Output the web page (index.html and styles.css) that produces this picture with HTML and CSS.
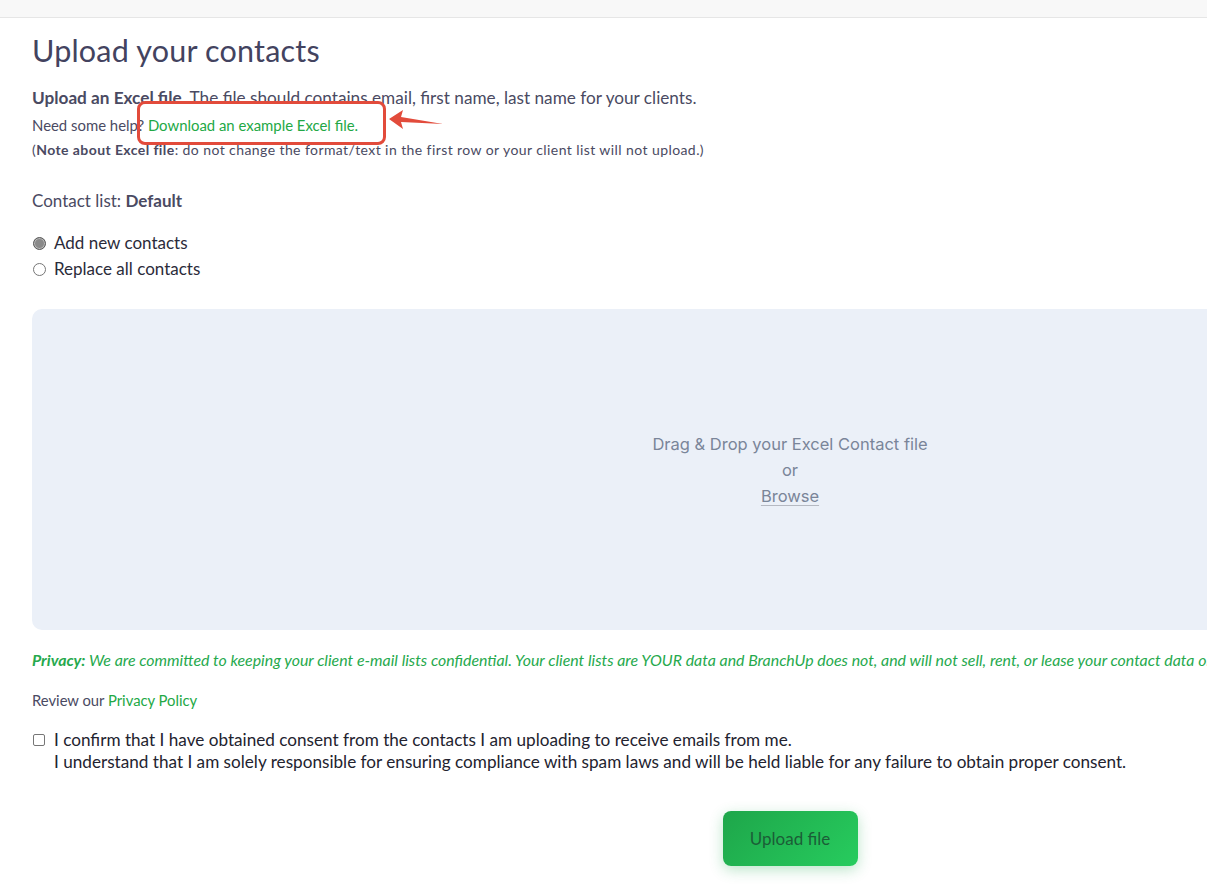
FILE: index.html
```html
<!DOCTYPE html>
<html>
<head>
<meta charset="utf-8">
<link rel="stylesheet" href="styles.css">
</head>
<body>
<div class="topbar"></div>
<main class="page">
  <h1 class="title">Upload your contacts</h1>
  <p class="intro"><strong>Upload an Excel file.</strong> The file should contains email, first name, last name for your clients.</p>
  <p class="help">Need some help? <span class="callout-wrap"><a class="link" href="#">Download an example Excel file.</a><span class="callout"></span>
    <svg class="arrow" width="60" height="24" viewBox="0 0 60 24"><path d="M2 10 L16 1 L14 8 L56 15 L14 13 L16 20 Z" fill="#e24b3b"/></svg></span></p>
  <p class="note">(<strong>Note about Excel file</strong>: do not change the format/text in the first row or your client list will not upload.)</p>

  <p class="list">Contact list: <strong>Default</strong></p>

  <div class="radios">
    <label class="radio"><span class="dot checked"></span>Add new contacts</label>
    <label class="radio"><span class="dot"></span>Replace all contacts</label>
  </div>

  <div class="dropzone">
    <div class="drop-text">
      <div>Drag &amp; Drop your Excel Contact file</div>
      <div>or</div>
      <div class="browse">Browse</div>
    </div>
  </div>

  <p class="privacy"><strong>Privacy:</strong> We are committed to keeping your client e-mail lists confidential. Your client lists are YOUR data and BranchUp does not, and will not sell, rent, or lease your contact data or share it with any third party.</p>

  <p class="review">Review our <a class="link" href="#">Privacy Policy</a></p>

  <label class="consent"><span class="box"></span><span>I confirm that I have obtained consent from the contacts I am uploading to receive emails from me.<br>I understand that I am solely responsible for ensuring compliance with spam laws and will be held liable for any failure to obtain proper consent.</span></label>

  <div class="actions"><button class="upload">Upload file</button></div>
</main>
</body>
</html>
```
FILE: styles.css
```css
html, body { margin: 0; padding: 0; overflow: hidden; background: #fff; }
body { font-family: "Lato", "Noto Sans", sans-serif; color: #46465f; width: 1207px; height: 890px; }
.topbar { height: 17px; background: #f8f8f8; border-bottom: 1px solid #e6e6e6; }
.page { width: 1516px; padding-left: 32px; }
.title { margin: 14px 0 0; font-size: 30.5px; font-weight: 400; color: #43435f; line-height: 36px; letter-spacing: 0.2px; }
p { margin: 0; }
.intro { margin-top: 19px; font-size: 17.2px; line-height: 22px; color: #4a4a62; }
.intro strong { font-weight: 700; }
.help { margin-top: 5px; font-size: 14.9px; line-height: 22px; color: #4a4a62; }
.link { color: #22a845; text-decoration: none; }
.callout-wrap { position: relative; }
.callout { position: absolute; left: -11px; top: -15px; width: 243px; height: 38px; border: 3px solid #e24b3b; border-radius: 8px; }
.arrow { position: absolute; left: 239px; top: -7px; }
.note { margin-top: 4px; font-size: 14px; letter-spacing: 0.42px; line-height: 20px; color: #4a4a62; }
.list { margin-top: 30px; font-size: 17px; line-height: 22px; color: #4a4a62; }
.radios { margin-top: 20px; display: flex; flex-direction: column; gap: 4px; }
.radio { display: flex; align-items: center; font-size: 17px; line-height: 22px; color: #2b2b3a; }
.dot { width: 13px; height: 13px; border: 1px solid #767676; border-radius: 50%; margin-right: 8px; margin-left: 1px; box-sizing: border-box; background: #fff; }
.dot.checked { background: #8a8a8a; border-color: #5a5a5a; box-shadow: inset 0 0 0 1px #b8b8b8; }
.dropzone { margin-top: 29px; height: 321px; background: #ebf0f8; border-radius: 10px; display: flex; align-items: center; justify-content: center; }
.drop-text { font-family: "Inter", "Noto Sans", sans-serif; font-size: 16.5px; line-height: 26px; color: #7a8599; text-align: center; margin-top: 1px; }
.browse { text-decoration: underline; text-decoration-color: #b5b9c2; text-underline-offset: 3px; }
.privacy { margin-top: 21px; font-size: 15.9px; line-height: 18px; font-style: italic; color: #26a94d; white-space: nowrap; }
.privacy strong { font-weight: 700; }
.review { margin-top: 22px; font-size: 14.8px; line-height: 18px; color: #4a4a62; }
.consent { margin-top: 20px; display: flex; align-items: flex-start; font-size: 17.15px; line-height: 22px; color: #23232f; }
.box { flex: none; width: 12px; height: 12px; border: 1px solid #767676; border-radius: 2px; box-sizing: border-box; margin: 5px 9px 0 1px; }
.actions { margin-top: 38px; display: flex; justify-content: center; }
.upload { width: 135px; height: 55px; border: 0; border-radius: 8px; background: linear-gradient(135deg, #1ea64a, #27cc5e); color: #1b5d37; font-family: "Lato", sans-serif; font-size: 17px; box-shadow: 0 4px 14px rgba(34, 170, 80, 0.3); }
```
